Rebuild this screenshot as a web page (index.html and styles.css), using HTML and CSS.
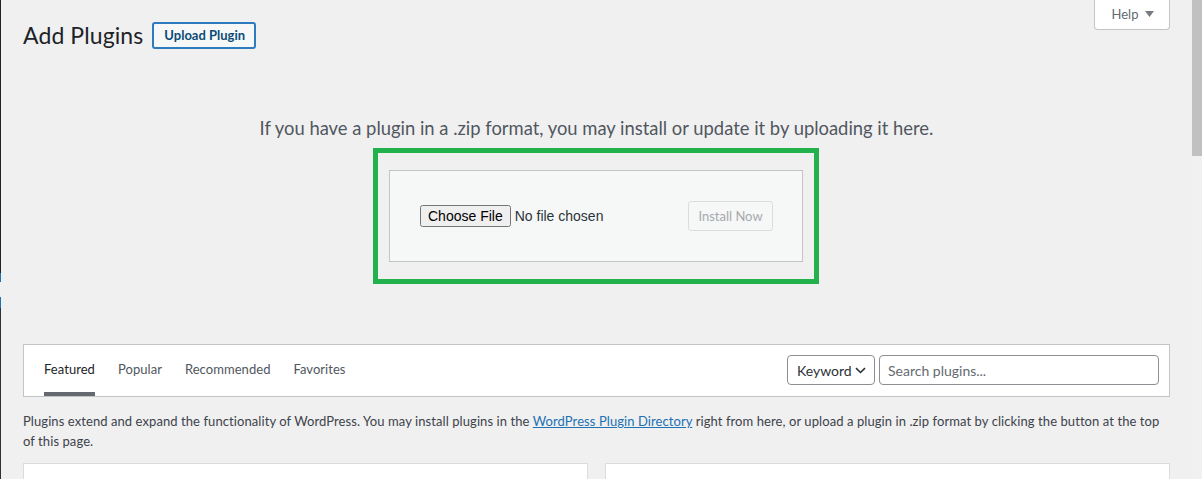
FILE: index.html
```html
<!DOCTYPE html>
<html lang="en">
<head>
<meta charset="utf-8">
<title>Add Plugins</title>
<link rel="stylesheet" href="styles.css">
</head>
<body>
<div class="page">
  <div class="edge">
    <span class="edge-gap-top"></span>
    <span class="edge-blue"></span>
    <span class="edge-light"></span>
    <span class="edge-blue edge-blue-2"></span>
    <span class="edge-rest"></span>
  </div>
  <main class="main">
    <header class="header">
      <div class="title-group">
        <h1 class="title">Add Plugins</h1>
        <button class="title-action" type="button">Upload Plugin</button>
      </div>
      <button class="help" type="button">Help
        <svg class="help-arrow" width="9" height="6" viewBox="0 0 9 6"><path d="M0 0h9L4.5 6z" fill="#787c82"/></svg>
      </button>
    </header>

    <section class="upload">
      <p class="install-help">If you have a plugin in a .zip format, you may install or update it by uploading it here.</p>
      <div class="highlight">
        <form class="upload-form">
          <input class="file-input" type="file" name="pluginzip">
          <button class="install-btn" type="button" disabled>Install Now</button>
        </form>
      </div>
    </section>

    <div class="filter">
      <ul class="filter-links">
        <li><a class="filter-link current" href="#">Featured</a></li>
        <li><a class="filter-link" href="#">Popular</a></li>
        <li><a class="filter-link" href="#">Recommended</a></li>
        <li><a class="filter-link" href="#">Favorites</a></li>
      </ul>
      <div class="search">
        <div class="select">Keyword
          <svg class="chev" width="11" height="7" viewBox="0 0 11 7"><path d="M1 1.2l4.5 4.3L10 1.2" fill="none" stroke="#2c3338" stroke-width="1.6"/></svg>
        </div>
        <input class="search-input" type="search" placeholder="Search plugins...">
      </div>
    </div>

    <p class="desc">Plugins extend and expand the functionality of WordPress. You may install plugins in the <a href="#">WordPress Plugin Directory</a> right from here, or upload a plugin in .zip format by clicking the button at the top of this page.</p>

    <div class="cards">
      <div class="card"></div>
      <div class="card"></div>
    </div>
  </main>
  <div class="scrollbar"><div class="thumb"></div></div>
</div>
</body>
</html>
```

FILE: styles.css
```css
html, body {
  margin: 0;
  height: 479px;
  overflow: hidden;
  background: #f0f0f1;
}
body {
  font-family: "Lato", "Liberation Sans", sans-serif;
  font-size: 13px;
  color: #3c434a;
}
.page {
  display: flex;
  height: 479px;
}
.edge {
  width: 1px;
  display: flex;
  flex-direction: column;
  flex: none;
}
.edge-gap-top { height: 273px; background: #1d2327; }
.edge-blue { height: 9px; background: #2271b1; }
.edge-light { height: 15px; background: #f0f0f1; }
.edge-blue-2 { height: 11px; }
.edge-rest { flex: 1; background: #2c3338; }

.main {
  flex: 1;
  padding: 0 22px;
  min-width: 0;
}
.scrollbar {
  width: 10px;
  flex: none;
  background: #f1f1f1;
}
.thumb {
  height: 156px;
  background: #c1c1c1;
}

.header {
  display: flex;
  justify-content: space-between;
  align-items: flex-start;
}
.title-group {
  display: flex;
  align-items: center;
  margin-top: 20px;
  gap: 9px;
}
.title {
  margin: 0;
  font-size: 23px;
  font-weight: 400;
  line-height: 30px;
  color: #1d2327;
  letter-spacing: 0.1px;
}
.title-action {
  font-family: inherit;
  font-size: 13px;
  font-weight: 700;
  color: #0a4b78;
  background: #f6f7f7;
  border: 2px solid #2e7bc0;
  border-radius: 3px;
  height: 27px;
  padding: 0 9px 0 10px;
  line-height: 23px;
}
.help {
  width: 76px;
  height: 30px;
  box-sizing: border-box;
  background: #fff;
  border: 1px solid #c3c4c7;
  border-top: none;
  border-radius: 0 0 4px 4px;
  font-family: inherit;
  font-size: 13px;
  color: #646970;
  display: flex;
  align-items: center;
  justify-content: center;
  gap: 7px;
  padding: 0 0 1px 2px;
}
.help-arrow { display: block; }

.upload {
  display: flex;
  flex-direction: column;
  align-items: center;
}
.install-help {
  margin: 66px 0 8px;
  font-size: 18.4px;
  line-height: 24px;
  color: #50575e;
  text-align: center;
}
.highlight {
  border: 5px solid #22b14c;
  padding: 17px 11px;
  margin-left: -1px;
}
.upload-form {
  width: 414px;
  box-sizing: border-box;
  background: #f6f7f7;
  border: 1px solid #c3c4c7;
  padding: 30px 29px 30px 30px;
  display: flex;
  justify-content: space-between;
  align-items: center;
  margin: 0;
}
.file-input {
  font-family: "Liberation Sans", sans-serif;
  font-size: 14px;
  color: #2c3338;
  width: 200px;
}
.install-btn {
  flex: none;
  white-space: nowrap;
  font-family: inherit;
  font-size: 13px;
  color: #a7aaad;
  background: #f6f7f7;
  border: 1px solid #dcdcde;
  border-radius: 3px;
  height: 30px;
  width: 85px;
  padding: 0;
}

.filter {
  margin-top: 60px;
  background: #fff;
  border: 1px solid #c3c4c7;
  display: flex;
  justify-content: space-between;
  align-items: flex-start;
  padding: 0 10px 0 20px;
}
.filter-links {
  list-style: none;
  margin: 0;
  padding: 0;
  display: flex;
  gap: 23px;
}
.filter-link {
  display: block;
  padding: 15px 0 14px;
  line-height: 18px;
  font-size: 13px;
  color: #50575e;
  text-decoration: none;
  border-bottom: 4px solid #fff;
  letter-spacing: 0.05px;
}
.filter-link.current {
  color: #1d2327;
  border-bottom-color: #646970;
}
.search {
  display: flex;
  gap: 4px;
  margin-top: 10px;
}
.select {
  width: 88px;
  height: 30px;
  box-sizing: border-box;
  border: 1px solid #8c8f94;
  border-radius: 4px;
  background: #fff;
  font-size: 14px;
  color: #2c3338;
  display: flex;
  align-items: center;
  padding: 0 8px 0 9px;
  justify-content: space-between;
}
.chev { display: block; }
.search-input {
  width: 280px;
  height: 30px;
  box-sizing: border-box;
  border: 1px solid #8c8f94;
  border-radius: 4px;
  background: #fff;
  font-family: inherit;
  font-size: 14px;
  padding: 0 8px;
  margin: 0;
  color: #2c3338;
}
.search-input::placeholder { color: #646970; }

.desc {
  margin: 14px 0 12px;
  padding-right: 9px;
  line-height: 20px;
  font-size: 13px;
  color: #3c434a;
  letter-spacing: 0.08px;
}
.desc a { color: #2271b1; }

.cards {
  display: flex;
  gap: 17px;
}
.card {
  flex: 1;
  height: 200px;
  background: #fff;
  border: 1px solid #dcdcde;
}
```
